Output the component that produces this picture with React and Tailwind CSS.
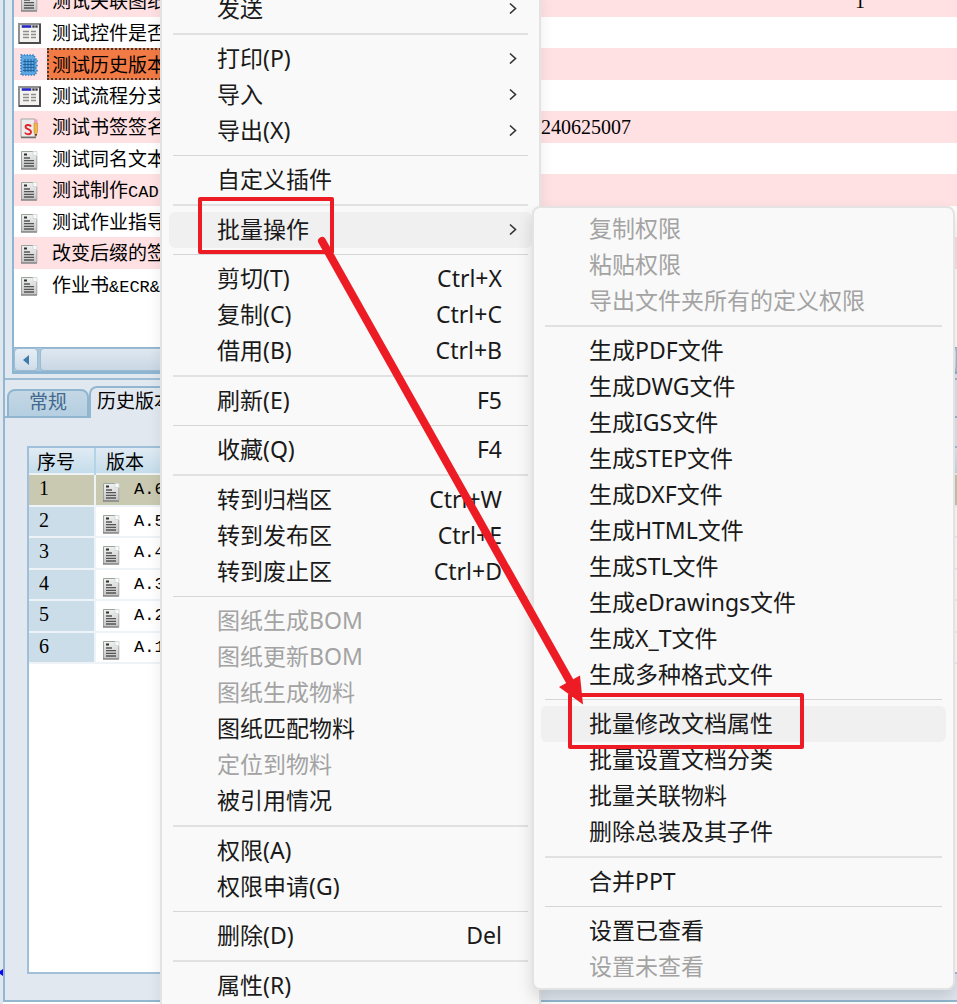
import React from "react";

const MENU = [
  { label: "发送", sub: true },
  null,
  { label: "打印(P)", sub: true },
  { label: "导入", sub: true },
  { label: "导出(X)", sub: true },
  null,
  { label: "自定义插件" },
  null,
  { label: "批量操作", sub: true, active: true },
  null,
  { label: "剪切(T)", key: "Ctrl+X" },
  { label: "复制(C)", key: "Ctrl+C" },
  { label: "借用(B)", key: "Ctrl+B" },
  null,
  { label: "刷新(E)", key: "F5" },
  null,
  { label: "收藏(Q)", key: "F4" },
  null,
  { label: "转到归档区", key: "Ctrl+W" },
  { label: "转到发布区", key: "Ctrl+E" },
  { label: "转到废止区", key: "Ctrl+D" },
  null,
  { label: "图纸生成BOM", disabled: true },
  { label: "图纸更新BOM", disabled: true },
  { label: "图纸生成物料", disabled: true },
  { label: "图纸匹配物料" },
  { label: "定位到物料", disabled: true },
  { label: "被引用情况" },
  null,
  { label: "权限(A)" },
  { label: "权限申请(G)" },
  null,
  { label: "删除(D)", key: "Del" },
  null,
  { label: "属性(R)" },
];

const SUBMENU = [
  { label: "复制权限", disabled: true },
  { label: "粘贴权限", disabled: true },
  { label: "导出文件夹所有的定义权限", disabled: true },
  null,
  { label: "生成PDF文件" },
  { label: "生成DWG文件" },
  { label: "生成IGS文件" },
  { label: "生成STEP文件" },
  { label: "生成DXF文件" },
  { label: "生成HTML文件" },
  { label: "生成STL文件" },
  { label: "生成eDrawings文件" },
  { label: "生成X_T文件" },
  { label: "生成多种格式文件" },
  null,
  { label: "批量修改文档属性", active: true },
  { label: "批量设置文档分类" },
  { label: "批量关联物料" },
  { label: "删除总装及其子件" },
  null,
  { label: "合并PPT" },
  null,
  { label: "设置已查看" },
  { label: "设置未查看", disabled: true },
];

const FILES = [
  { icon: "doc", name: "测试关联图纸", count: "1" },
  { icon: "form", name: "测试控件是否" },
  { icon: "grid", name: "测试历史版本", selected: true },
  { icon: "form", name: "测试流程分支" },
  { icon: "sign", name: "测试书签签名", code: "240625007" },
  { icon: "doc", name: "测试同名文本" },
  { icon: "doc", name: "测试制作", latin: "CAD" },
  { icon: "doc", name: "测试作业指导" },
  { icon: "doc", name: "改变后缀的签" },
  { icon: "doc", name: "作业书", latin: "&ECR&" },
];

const VERSIONS = ["A.6", "A.5", "A.4", "A.3", "A.2", "A.1"];

function DocIcon() {
  return (
    <svg width="18" height="20" viewBox="0 0 18 20" className="block" aria-hidden="true">
      <defs>
        <linearGradient id="paper" x1="0" y1="0" x2="0" y2="1">
          <stop offset="0" stopColor="#f2f2f2" />
          <stop offset="1" stopColor="#c4c4c4" />
        </linearGradient>
      </defs>
      <path d="M1 1h16v18H1z" fill="url(#paper)" />
      <path d="M1.500 19V1.500H13" fill="none" stroke="#9aa59a" />
      <path d="M1 19h16" fill="none" stroke="#7d7d7d" strokeWidth="1.400" />
      <path d="M16.800 6v13" fill="none" stroke="#a9a9a9" />
      <path d="M13 1.500v4h4V1.500z" fill="#fafcfb" stroke="#d3dbd7" />
      <path d="M4 4.500h3" stroke="#2e2e2e" strokeWidth="2" />
      <path d="M4 8h6M4 10.700h10M4 13.300h10M4 16h10" stroke="#555" strokeWidth="1.300" />
    </svg>
  );
}

function FormIcon() {
  return (
    <svg width="23" height="21" viewBox="0 0 23 21" className="block" aria-hidden="true">
      <path d="M1 1h21v19H1z" fill="#f4f2ee" stroke="#8f8f8f" strokeWidth="2" />
      <path d="M1 20h21V1" fill="none" stroke="#4c4c4c" strokeWidth="2" />
      <path d="M3 3.500h17" stroke="#c3c0d4" strokeWidth="3" />
      <path d="M4 3.500h9" stroke="#2323c8" strokeWidth="2.400" />
      <path d="M14.500 3.500h2M17.500 3.500h2" stroke="#333" strokeWidth="2" />
      <path d="M5 8.500h6M13 8.500h5M5 11.500h6M13 11.500h5M5 14.500h6M13 14.500h5" stroke="#8d8d8d" strokeWidth="1.400" />
    </svg>
  );
}

function GridIcon() {
  return (
    <svg width="18" height="22" viewBox="0 0 18 22" className="block" aria-hidden="true">
      <path d="M1 1h13l1 3 3 3-2 2 1 3-1 2 1 3-2 4H1z" fill="#5ea7e0" />
      <path
        d="M1 1h13l1 3 3 3-2 2 1 3-1 2 1 3-2 4H1z"
        fill="none"
        stroke="#2f7fc4"
        strokeWidth="1.600"
        strokeDasharray="1.4 1.4"
      />
      <path d="M3 7.500h11M3 10.500h11M3 13.500h11M3 16.500h11M5 5v13M8 5v13M11 5v13M14 5v13" stroke="#1c5f9c" strokeWidth="0.900" />
    </svg>
  );
}

function SignIcon() {
  return (
    <svg width="18" height="21" viewBox="0 0 18 21" className="block" aria-hidden="true">
      <path d="M1 1h14v18H1z" fill="#ececec" stroke="#a5a5a5" />
      <path d="M1 19.500h15" stroke="#6f6f6f" strokeWidth="1.500" />
      <path
        d="M11 8.500C10 6.500 5.500 6.500 5.500 9s5.500 2 5.500 5-5 3-6 .5"
        fill="none"
        stroke="#e0242c"
        strokeWidth="1.900"
      />
      <path d="M14 5h3.500v9l-1.700 4-1.800-4z" fill="#f0b64a" stroke="#c98a2e" strokeWidth="0.600" />
      <path d="M14 1.500h3.500V5H14z" fill="#ef9db8" />
      <path d="M15 16h2l-1 3z" fill="#3a3026" />
    </svg>
  );
}

const ICONS = { doc: DocIcon, form: FormIcon, grid: GridIcon, sign: SignIcon };

function Chevron() {
  return (
    <svg width="10" height="12" viewBox="0 0 10 12" aria-hidden="true">
      <path d="M2 1.500 7.500 6.500 2 11.500" fill="none" stroke="#333" strokeWidth="1.600" />
    </svg>
  );
}

function MenuItems({ items, open }) {
  let separators = 0;
  return items.map((item, i) => {
    if (!item) {
      separators += 1;
      return (
        <div key={i} role="separator" className="px-1 py-1.5">
          <div className={separators % 2 ? "h-0.5 bg-[#e1e1e1]" : "h-px bg-[#d6d6d6]"} />
        </div>
      );
    }
    return (
      <button
        key={i}
        type="button"
        role="menuitem"
        disabled={item.disabled}
        aria-haspopup={item.sub ? "menu" : undefined}
        aria-expanded={item.sub ? Boolean(item.active && open) : undefined}
        className={`flex h-9 w-full items-center justify-between rounded-md pr-[30px] pb-0.5 pl-12 text-left whitespace-nowrap ${
          item.active ? "bg-[#f0f0f0]" : ""
        } ${item.disabled ? "text-[#a3a3a3]" : "text-[#1a1a1a]"}`}
      >
        <span>{item.label}</span>
        {item.key && <span>{item.key}</span>}
        {item.sub && (
          <span className="-mr-4">
            <Chevron />
          </span>
        )}
      </button>
    );
  });
}

function FileList() {
  return (
    <div className="h-[347px] overflow-hidden bg-white">
      <table className="-mt-[15px] w-full table-fixed border-collapse leading-7">
        <colgroup>
          <col className="w-[33px]" />
          <col className="w-[494px]" />
          <col className="w-[314px]" />
          <col />
        </colgroup>
        <tbody>
          {FILES.map((f) => {
            const Icon = ICONS[f.icon];
            return (
              <tr key={f.name} className="h-[31px] odd:h-8 odd:bg-[#ffe1e3]">
                <td className="p-0 pr-[3px] pt-0.5">
                  <div className="flex justify-center">
                    <Icon />
                  </div>
                </td>
                <td className="p-0 whitespace-nowrap">
                  <div
                    className={
                      f.selected
                        ? "border-2 border-dotted border-[#3b3b3b] bg-[#f27a45] pl-[3px] leading-7"
                        : "pl-[5px] pb-0.5"
                    }
                  >
                    {f.name}
                    {f.latin && (
                      <span className="font-['Liberation_Mono',monospace] text-[17px] leading-none">{f.latin}</span>
                    )}
                  </div>
                </td>
                <td className="p-0 font-['Liberation_Serif',serif] text-xl leading-7">{f.code}</td>
                <td className="p-0 font-['Liberation_Serif',serif] text-xl leading-7">{f.count}</td>
              </tr>
            );
          })}
        </tbody>
      </table>
    </div>
  );
}

function HorizontalScroll() {
  return (
    <div className="flex h-[25px] gap-0.5 border-y border-[#8fb4cf] bg-[#a9c5da]">
      <button
        type="button"
        aria-label="向左滚动"
        className="flex w-6 items-center justify-center rounded border border-[#9dbbd2] bg-linear-to-b from-[#e6eef5] to-[#cfdce8]"
      >
        <svg width="6" height="10" viewBox="0 0 6 10" aria-hidden="true">
          <path d="M6 0v10L0 5z" fill="#3f7cab" />
        </svg>
      </button>
      <div className="grow rounded border border-[#9dbbd2] bg-linear-to-b from-[#dfe8f1] to-[#c9d7e4]" />
    </div>
  );
}

function VersionTable() {
  return (
    <div className="ml-[22px] grow border-2 border-r-0 border-[#9fc0d8] bg-white">
      <table className="w-full table-fixed border-collapse">
        <colgroup>
          <col className="w-[66px]" />
          <col />
        </colgroup>
        <thead>
          <tr className="h-[26px] bg-linear-to-b from-[#e0ebf4] to-[#c3dcea] leading-6">
            <th className="border-r-2 border-[#b3d3e6] p-0 pl-2 text-left font-normal">序号</th>
            <th className="p-0 pl-[10px] text-left font-normal">版本</th>
          </tr>
        </thead>
        <tbody className="text-[17px] leading-6">
          {VERSIONS.map((v, i) => (
            <tr key={v} className="h-8 even:h-[31px]">
              <td
                className={`border-2 border-l-0 border-[#eef3f7] p-0 pb-1 pl-2.5 font-['Liberation_Serif',serif] text-xl leading-6 ${
                  i === 0 ? "bg-[#c8c9b0]" : "bg-[#cadde9]"
                }`}
              >
                {i + 1}
              </td>
              <td className={`border-y-2 border-[#eef3f7] p-0 pl-1.5 ${i === 0 ? "bg-[#c8c9b0]" : "bg-white"}`}>
                <div className="flex items-center gap-3.5 font-['Liberation_Mono',monospace]">
                  <span className="pt-1">
                    <DocIcon />
                  </span>
                  {v}
                </div>
              </td>
            </tr>
          ))}
        </tbody>
      </table>
    </div>
  );
}

function Workspace() {
  return (
    <div className="flex h-full bg-[#dfe7ef] font-['Noto_Sans_CJK_SC',sans-serif] text-[19px] text-black">
      <div className="flex w-[3px] shrink-0 items-end pb-7">
        <svg width="3" height="7" viewBox="0 0 3 7" aria-hidden="true">
          <path d="M3 0v7L0 5V2z" fill="#0a0af5" />
        </svg>
      </div>
      <div className="flex min-w-0 grow flex-col">
        <div className="flex grow flex-col border-b-2 border-l-2 border-[#93b7d1] bg-[#e1e8f0]">
          <div className="border-b-2 border-[#9dbdd4] pb-1">
            <div className="ml-[7px] border-b-2 border-l-2 border-[#8db6d3]">
              <FileList />
              <HorizontalScroll />
            </div>
          </div>
          <div role="tablist" className="mt-1.5 flex h-8 items-end">
            <div className="h-full w-0.5 border-b-2 border-[#93b7d1]" />
            <button
              type="button"
              role="tab"
              aria-selected="false"
              className="h-[29px] w-[82px] rounded-t-lg border-2 border-[#8fb5cf] bg-linear-to-b from-[#c4d7e5] to-[#b4cfe1] pb-1.5 leading-5 text-[#43698c]"
            >
              常规
            </button>
            <button
              type="button"
              role="tab"
              aria-selected="true"
              className="h-full w-[120px] rounded-t-lg border-2 border-b-0 border-[#93b7d1] pb-1.5 pl-1.5 text-left leading-5 whitespace-nowrap"
            >
              历史版本
            </button>
            <div className="h-full grow border-b-2 border-[#93b7d1]" />
          </div>
          <div className="flex grow flex-col pt-7 pb-[26px]">
            <VersionTable />
          </div>
        </div>
        <div className="h-0.5 bg-white" />
      </div>
    </div>
  );
}

function Annotations() {
  return (
    <svg
      width="957"
      height="1004"
      viewBox="0 0 957 1004"
      className="pointer-events-none absolute top-0 left-0"
      aria-hidden="true"
    >
      <g fill="none" stroke="#ed1c24" strokeLinejoin="round">
        <rect x="200" y="199" width="132" height="53" strokeWidth="4" />
        <rect x="570" y="695" width="232" height="52" strokeWidth="4" />
        <path d="M322 241 573 687" strokeWidth="8" strokeLinecap="round" />
      </g>
      <path d="M559 687 580 675.500 583 704.500z" fill="#ed1c24" />
    </svg>
  );
}

export default function App() {
  return (
    <main className="relative h-screen w-full overflow-hidden">
      <Workspace />
      <div
        role="menu"
        aria-label="文件"
        className="absolute -top-[9px] left-40 w-[381px] border-x-2 border-[#e3e3e3] bg-[#f9f9f9] px-[7px] pb-4 font-['Noto_Sans','Noto_Sans_CJK_SC',sans-serif] text-[23px] leading-8 shadow-[0_6px_14px_rgba(0,0,0,0.08)]"
      >
        <MenuItems items={MENU} open />
      </div>
      <div
        role="menu"
        aria-label="批量操作"
        className="absolute top-[206px] left-[532px] w-[423px] rounded-lg border-2 border-[#e3e3e3] bg-[#f9f9f9] px-[7px] py-[3px] font-['Noto_Sans','Noto_Sans_CJK_SC',sans-serif] text-[23px] leading-8 shadow-[0_8px_16px_rgba(0,0,0,0.14)]"
      >
        <MenuItems items={SUBMENU} />
      </div>
      <Annotations />
    </main>
  );
}
